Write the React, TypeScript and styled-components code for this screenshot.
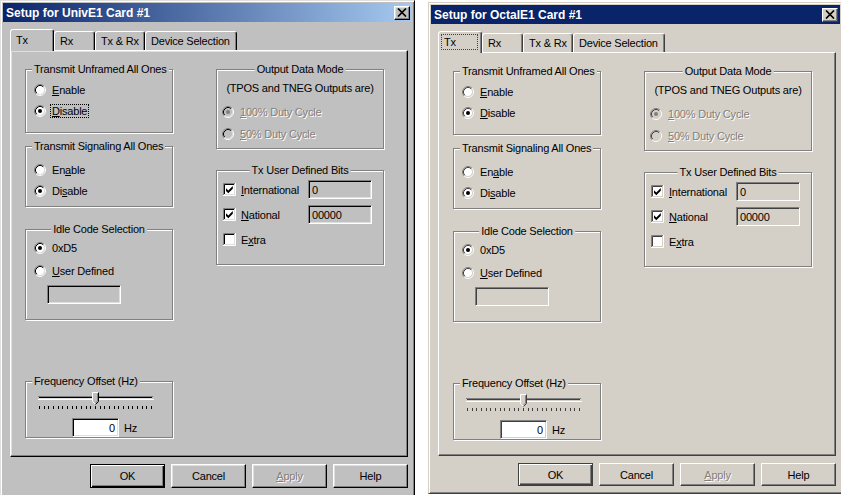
import React from 'react';
import styled, { createGlobalStyle, ThemeProvider, css, useTheme } from 'styled-components';

interface Look {
  face: string;
  light: string;
  hilight: string;
  shadow: string;
  dark: string;
  field: string;
  titleFrom: string;
  titleTo: string;
  buttonHeight: number;
}

declare module 'styled-components' {
  // eslint-disable-next-line @typescript-eslint/no-empty-interface
  export interface DefaultTheme extends Look {}
}

const classicLook: Look = {
  face: '#c0c0c0',
  light: '#dfdfdf',
  hilight: '#ffffff',
  shadow: '#808080',
  dark: '#000000',
  field: '#ffffff',
  titleFrom: '#0a246a',
  titleTo: '#a6caf0',
  buttonHeight: 24,
};

const standardLook: Look = {
  face: '#d4d0c8',
  light: '#d4d0c8',
  hilight: '#ffffff',
  shadow: '#808080',
  dark: '#404040',
  field: '#ffffff',
  titleFrom: '#0a246a',
  titleTo: '#0a246a',
  buttonHeight: 23,
};

const GlobalStyle = createGlobalStyle`
  html, body {
    margin: 0;
    padding: 0;
    background: #ffffff;
    overflow: hidden;
  }
  body {
    font-family: "Liberation Sans", Arial, sans-serif;
    font-size: 11px;
    letter-spacing: -0.2px;
    color: #000000;
  }
`;

const Desktop = styled.main`
  display: flex;
  align-items: flex-start;
  gap: 13px;
  width: 841px;
  height: 495px;
  overflow: hidden;
`;

const Window = styled.section<{ $top: number; $height: number }>`
  flex: none;
  box-sizing: border-box;
  width: 415px;
  height: ${(p) => p.$height}px;
  margin-top: ${(p) => p.$top}px;
  padding: 2px;
  background: ${(p) => p.theme.face};
  border: 1px solid;
  border-color: ${(p) => `${p.theme.light} ${p.theme.dark} ${p.theme.dark} ${p.theme.light}`};
  box-shadow: inset 1px 1px 0 ${(p) => p.theme.hilight}, inset -1px -1px 0 ${(p) => p.theme.shadow};
  display: flex;
  flex-direction: column;
`;

const TitleBar = styled.header`
  flex: none;
  height: 19px;
  display: flex;
  align-items: center;
  justify-content: space-between;
  padding: 0 2px 0 3px;
  background: linear-gradient(to right, ${(p) => p.theme.titleFrom}, ${(p) => p.theme.titleTo});
`;

const TitleText = styled.h1`
  margin: 0;
  font-family: "Liberation Sans", Arial, sans-serif;
  font-size: 12px;
  font-weight: bold;
  letter-spacing: 0;
  color: #ffffff;
  white-space: nowrap;
`;

const CloseButton = styled.button`
  box-sizing: border-box;
  width: 16px;
  height: 14px;
  padding: 0;
  display: flex;
  align-items: center;
  justify-content: center;
  background: ${(p) => p.theme.face};
  border: 1px solid;
  border-color: ${(p) => `${p.theme.hilight} ${p.theme.dark} ${p.theme.dark} ${p.theme.hilight}`};
  box-shadow: inset -1px -1px 0 ${(p) => p.theme.shadow}, inset 1px 1px 0 ${(p) => p.theme.light};
`;

const Body = styled.div`
  flex: 1;
  display: flex;
  flex-direction: column;
  padding: 7px 0 0 7px;
`;

const TabStrip = styled.div`
  position: relative;
  z-index: 1;
  display: flex;
  align-items: flex-end;
  height: 21px;
  padding-left: 2px;
`;

const Tab = styled.div<{ $w: number; $active?: boolean }>`
  flex: none;
  position: relative;
  box-sizing: border-box;
  width: ${(p) => p.$w + (p.$active ? 2 : 0)}px;
  height: ${(p) => (p.$active ? 22 : 19)}px;
  margin: 0 0 ${(p) => (p.$active ? -1 : 0)}px ${(p) => (p.$active ? -2 : 0)}px;
  z-index: ${(p) => (p.$active ? 2 : 1)};
  display: flex;
  align-items: stretch;
  padding: ${(p) => (p.$active ? '2px 3px 3px 2px' : '1px 3px 1px 2px')};
  background: ${(p) => p.theme.face};
  border: 1px solid;
  border-bottom: none;
  border-color: ${(p) => `${p.theme.hilight} ${p.theme.dark} transparent ${p.theme.hilight}`};
  border-radius: 3px 3px 0 0;
  box-shadow: inset -1px 0 0 ${(p) => p.theme.shadow};
`;

const TabLabel = styled.span<{ $focus?: boolean }>`
  flex: 1;
  display: flex;
  align-items: center;
  padding-left: 3px;
  white-space: nowrap;
  ${(p) =>
    p.$focus &&
    css`
      outline: 1px dotted ${p.theme.dark};
      outline-offset: -1px;
    `}
`;

const Panel = styled.div<{ $h: number }>`
  box-sizing: border-box;
  width: 398px;
  height: ${(p) => p.$h}px;
  padding: 18px 0 0 14px;
  display: flex;
  align-items: flex-start;
  gap: 43px;
  border: 1px solid;
  border-color: ${(p) => `${p.theme.hilight} ${p.theme.dark} ${p.theme.dark} ${p.theme.hilight}`};
  box-shadow: inset -1px -1px 0 ${(p) => p.theme.shadow}, inset 1px 1px 0 ${(p) => p.theme.light};
`;

const Column = styled.div<{ $w: number }>`
  flex: none;
  width: ${(p) => p.$w}px;
  display: flex;
  flex-direction: column;
`;

const Group = styled.div<{ $h: number; $pad: number; $mt?: number }>`
  position: relative;
  box-sizing: border-box;
  height: ${(p) => p.$h}px;
  margin-top: ${(p) => p.$mt ?? 0}px;
  padding-top: ${(p) => p.$pad}px;
  border: 1px solid ${(p) => p.theme.shadow};
  box-shadow: 1px 1px 0 ${(p) => p.theme.hilight}, inset 1px 1px 0 ${(p) => p.theme.hilight};
  display: flex;
  flex-direction: column;
`;

const Caption = styled.span<{ $center?: boolean }>`
  position: absolute;
  top: -7px;
  line-height: 13px;
  padding: 0 2px;
  background: ${(p) => p.theme.face};
  white-space: nowrap;
  ${(p) =>
    p.$center
      ? css`
          left: 50%;
          transform: translateX(-50%);
        `
      : css`
          left: 6px;
        `}
`;

const OptionRow = styled.div<{ $h: number; $indent: number; $gap?: number }>`
  flex: none;
  display: flex;
  align-items: center;
  height: ${(p) => p.$h}px;
  padding-left: ${(p) => p.$indent}px;
  gap: ${(p) => p.$gap ?? 6}px;
`;

const InfoLine = styled.div`
  flex: none;
  height: 16px;
  line-height: 16px;
  margin-bottom: 5px;
  text-align: center;
  white-space: nowrap;
`;

const Label = styled.span<{ $disabled?: boolean; $focus?: boolean; $w?: number }>`
  white-space: nowrap;
  line-height: 12px;
  ${(p) => p.$w !== undefined && css`width: ${p.$w}px; flex: none;`}
  ${(p) =>
    p.$disabled &&
    css`
      color: ${p.theme.shadow};
      text-shadow: 1px 1px 0 ${p.theme.hilight};
    `}
  ${(p) =>
    p.$focus &&
    css`
      outline: 1px dotted ${p.theme.dark};
      outline-offset: 0;
      padding: 0 1px;
      margin-left: -1px;
    `}
`;

const Hotkey = styled.span`
  text-decoration: underline;
`;

const FieldRow = styled.div<{ $indent: number; $mt?: number }>`
  flex: none;
  display: flex;
  align-items: center;
  gap: 5px;
  margin-top: ${(p) => p.$mt ?? 0}px;
  padding-left: ${(p) => p.$indent}px;
`;

const EditBox = styled.input<{ $w: number; $plain?: boolean; $right?: boolean }>`
  box-sizing: border-box;
  width: ${(p) => p.$w}px;
  height: 19px;
  margin: 0;
  padding: 0 3px;
  font-family: "Liberation Sans", Arial, sans-serif;
  font-size: 11px;
  letter-spacing: -0.2px;
  color: #000000;
  text-align: ${(p) => (p.$right ? 'right' : 'left')};
  background: ${(p) => (p.$plain ? p.theme.face : p.theme.field)};
  border: 1px solid;
  border-color: ${(p) => `${p.theme.shadow} ${p.theme.hilight} ${p.theme.hilight} ${p.theme.shadow}`};
  box-shadow: inset 1px 1px 0 ${(p) => p.theme.dark}, inset -1px -1px 0 ${(p) => p.theme.light};
  outline: none;
`;

const SliderRow = styled.div`
  flex: none;
  height: 22px;
  padding-left: 10px;
`;

const ButtonRow = styled.div`
  display: flex;
  justify-content: flex-end;
  gap: 6px;
  width: 398px;
  margin-top: 7px;
`;

const PushButton = styled.button<{ $default?: boolean }>`
  box-sizing: border-box;
  width: 75px;
  height: ${(p) => p.theme.buttonHeight}px;
  padding: 0;
  font-family: "Liberation Sans", Arial, sans-serif;
  font-size: 11px;
  letter-spacing: -0.2px;
  color: #000000;
  background: ${(p) => p.theme.face};
  border: 1px solid;
  border-color: ${(p) => `${p.theme.hilight} ${p.theme.dark} ${p.theme.dark} ${p.theme.hilight}`};
  box-shadow: inset -1px -1px 0 ${(p) => p.theme.shadow}, inset 1px 1px 0 ${(p) => p.theme.light};
  ${(p) =>
    p.$default &&
    css`
      border-color: ${p.theme.dark};
      box-shadow: inset 1px 1px 0 ${p.theme.hilight}, inset -1px -1px 0 ${p.theme.dark},
        inset -2px -2px 0 ${p.theme.shadow};
    `}
  &:disabled {
    color: ${(p) => p.theme.shadow};
    text-shadow: 1px 1px 0 ${(p) => p.theme.hilight};
  }
`;

const MarkSvg = styled.svg`
  flex: none;
  display: block;
`;

function CloseGlyph() {
  return (
    <MarkSvg width="10" height="9" viewBox="0 0 10 9">
      <path d="M1 0.5 L9 8.5 M9 0.5 L1 8.5" stroke="#000" strokeWidth="1.7" fill="none" />
    </MarkSvg>
  );
}

function RadioMark({ checked, disabled }: { checked?: boolean; disabled?: boolean }) {
  const t = useTheme();
  return (
    <MarkSvg width="12" height="12" viewBox="0 0 12 12">
      <circle cx="6" cy="6" r="4.2" fill={disabled ? t.face : t.field} />
      <path d="M2.11 9.89A5.5 5.5 0 0 1 9.89 2.11" stroke={t.shadow} fill="none" />
      <path d="M9.89 2.11A5.5 5.5 0 0 1 2.11 9.89" stroke={t.hilight} fill="none" />
      <path d="M2.82 9.18A4.5 4.5 0 0 1 9.18 2.82" stroke={t.dark} fill="none" />
      <path d="M9.18 2.82A4.5 4.5 0 0 1 2.82 9.18" stroke={t.light} fill="none" />
      {checked && <circle cx="6" cy="6" r="2" fill={disabled ? t.shadow : '#000'} />}
    </MarkSvg>
  );
}

function CheckMark({ checked }: { checked?: boolean }) {
  const t = useTheme();
  return (
    <MarkSvg width="13" height="13" viewBox="0 0 13 13">
      <rect x="2" y="2" width="9" height="9" fill={t.field} />
      <path d="M0.5 12V0.5H12" stroke={t.shadow} fill="none" />
      <path d="M12.5 0V12.5H0" stroke={t.hilight} fill="none" />
      <path d="M1.5 11V1.5H11" stroke={t.dark} fill="none" />
      <path d="M11.5 1V11.5H1" stroke={t.light} fill="none" />
      {checked && <path d="M3 5.2 L5.3 7.5 L9.8 3 V5.8 L5.3 10.3 L3 8 Z" fill="#000" />}
    </MarkSvg>
  );
}

function TrackBar() {
  const t = useTheme();
  const ticks = Array.from({ length: 25 }, (_, i) => 3 + (i * 112) / 24);
  return (
    <MarkSvg width="120" height="22" viewBox="0 0 120 22">
      <path d="M2 6.5H117" stroke={t.shadow} />
      <path d="M3 7.5H116" stroke={t.dark} />
      <path d="M3 8.5H116" stroke={t.light} />
      <path d="M2 9.5H118" stroke={t.hilight} />
      <path d="M56.5 2.5H62.5V11.5L59.5 14.5L56.5 11.5Z" fill={t.face} />
      <path d="M59.5 14.5L56.5 11.5V2.5H62.5" stroke={t.hilight} fill="none" />
      <path d="M62.5 2.5V11.5L59.5 14.5" stroke={t.dark} fill="none" />
      <path d="M61.5 3.5V11L59.5 13" stroke={t.shadow} fill="none" />
      {ticks.map((x) => (
        <rect key={x} x={Math.round(x)} y="16" width="1" height="3" fill={t.dark} />
      ))}
    </MarkSvg>
  );
}

function Keyed({ text, at }: { text: string; at?: number }) {
  if (at === undefined) return <>{text}</>;
  return (
    <>
      {text.slice(0, at)}
      <Hotkey>{text.charAt(at)}</Hotkey>
      {text.slice(at + 1)}
    </>
  );
}

function Radio({
  text,
  at,
  checked,
  disabled,
  focus,
  h,
  indent,
}: {
  text: string;
  at?: number;
  checked?: boolean;
  disabled?: boolean;
  focus?: boolean;
  h: number;
  indent: number;
}) {
  return (
    <OptionRow $h={h} $indent={indent}>
      <RadioMark checked={checked} disabled={disabled} />
      <Label $disabled={disabled} $focus={focus}>
        <Keyed text={text} at={at} />
      </Label>
    </OptionRow>
  );
}

function BitRow({ text, at, checked, value }: { text: string; at: number; checked?: boolean; value?: string }) {
  return (
    <OptionRow $h={25} $indent={6} $gap={5}>
      <CheckMark checked={checked} />
      <Label $w={62}>
        <Keyed text={text} at={at} />
      </Label>
      {value !== undefined && <EditBox $w={64} $plain readOnly value={value} />}
    </OptionRow>
  );
}

const TABS = [
  { label: 'Tx', w: 42 },
  { label: 'Rx', w: 41 },
  { label: 'Tx & Rx', w: 50 },
  { label: 'Device Selection', w: 92 },
];

interface DialogProps {
  title: string;
  look: Look;
  top: number;
  height: number;
  panelHeight: number;
  tabFocus?: boolean;
  optionFocus?: boolean;
}

function SetupDialog({ title, look, top, height, panelHeight, tabFocus, optionFocus }: DialogProps) {
  return (
    <ThemeProvider theme={look}>
      <Window $top={top} $height={height}>
        <TitleBar>
          <TitleText>{title}</TitleText>
          <CloseButton aria-label="Close">
            <CloseGlyph />
          </CloseButton>
        </TitleBar>
        <Body>
          <TabStrip>
            {TABS.map((tab, i) => (
              <Tab key={tab.label} $w={tab.w} $active={i === 0}>
                <TabLabel $focus={i === 0 && tabFocus}>{tab.label}</TabLabel>
              </Tab>
            ))}
          </TabStrip>
          <Panel $h={panelHeight}>
            <Column $w={148}>
              <Group $h={64} $pad={9}>
                <Caption>Transmit Unframed All Ones</Caption>
                <Radio h={21} indent={8} text="Enable" at={0} />
                <Radio h={21} indent={8} text="Disable" at={0} checked focus={optionFocus} />
              </Group>
              <Group $h={61} $pad={12} $mt={13}>
                <Caption>Transmit Signaling All Ones</Caption>
                <Radio h={21} indent={8} text="Enable" at={2} />
                <Radio h={21} indent={8} text="Disable" at={2} checked />
              </Group>
              <Group $h={91} $pad={6} $mt={22}>
                <Caption $center>Idle Code Selection</Caption>
                <Radio h={23} indent={8} text="0xD5" checked />
                <Radio h={23} indent={8} text="User Defined" at={0} />
                <FieldRow $indent={21} $mt={3}>
                  <EditBox $w={74} $plain readOnly value="" />
                </FieldRow>
              </Group>
              <Group $h={57} $pad={8} $mt={61}>
                <Caption>Frequency Offset (Hz)</Caption>
                <SliderRow>
                  <TrackBar />
                </SliderRow>
                <FieldRow $indent={46} $mt={6}>
                  <EditBox $w={47} $right readOnly value="0" />
                  <span>Hz</span>
                </FieldRow>
              </Group>
            </Column>
            <Column $w={168}>
              <Group $h={80} $pad={10}>
                <Caption $center>Output Data Mode</Caption>
                <InfoLine>(TPOS and TNEG Outputs are)</InfoLine>
                <Radio h={22} indent={5} text="100% Duty Cycle" at={0} checked disabled />
                <Radio h={22} indent={5} text="50% Duty Cycle" at={0} disabled />
              </Group>
              <Group $h={95} $pad={6} $mt={21}>
                <Caption $center>Tx User Defined Bits</Caption>
                <BitRow text="International" at={0} checked value="0" />
                <BitRow text="National" at={0} checked value="00000" />
                <BitRow text="Extra" at={1} />
              </Group>
            </Column>
          </Panel>
          <ButtonRow>
            <PushButton $default>OK</PushButton>
            <PushButton>Cancel</PushButton>
            <PushButton disabled>
              <Keyed text="Apply" at={0} />
            </PushButton>
            <PushButton>Help</PushButton>
          </ButtonRow>
        </Body>
      </Window>
    </ThemeProvider>
  );
}

export default function App() {
  return (
    <>
      <GlobalStyle />
      <Desktop>
        <SetupDialog
          title="Setup for UnivE1 Card #1"
          look={classicLook}
          top={0}
          height={500}
          panelHeight={407}
          optionFocus
        />
        <SetupDialog
          title="Setup for OctalE1 Card #1"
          look={standardLook}
          top={2}
          height={492}
          panelHeight={404}
          tabFocus
        />
      </Desktop>
    </>
  );
}
